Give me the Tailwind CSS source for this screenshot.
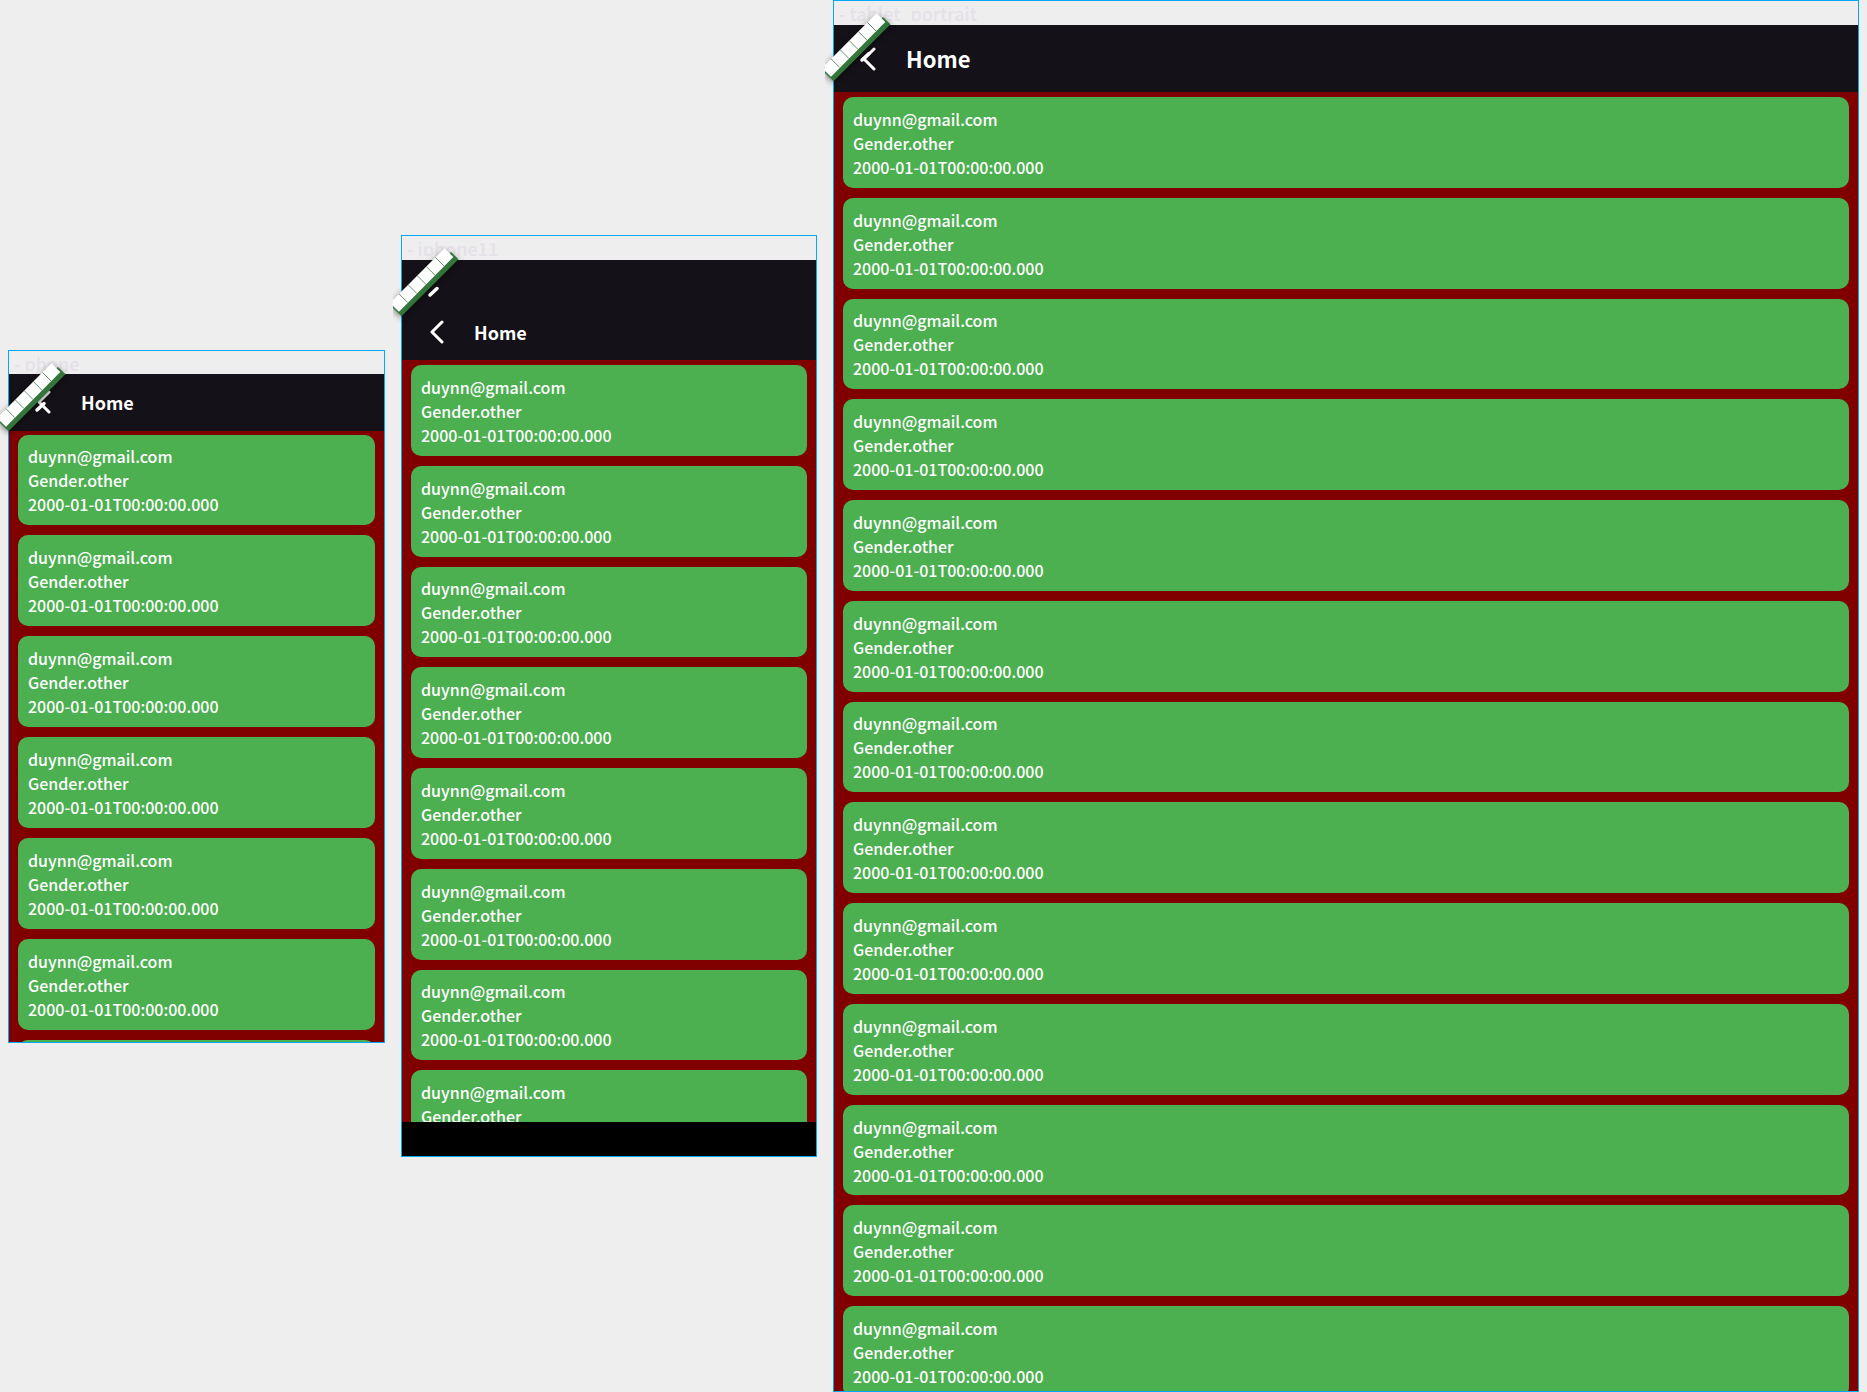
<!DOCTYPE html>
<html lang="en">
<head>
<meta charset="utf-8">
<meta name="viewport" content="width=device-width, initial-scale=1">
<title>Home</title>
<script src="https://cdn.jsdelivr.net/npm/@tailwindcss/browser@4"></script>
</head>
<body class="bg-[#eeeeee] font-['Noto_Sans_CJK_SC',sans-serif] text-base text-white">

<main class="flex h-screen items-center gap-4 overflow-hidden px-2">

  <section class="relative flex h-[693px] w-[377px] shrink-0 flex-col border border-[#03a9f4]" data-cards="7">
    <div class="h-[23px] shrink-0 pl-[5px]"><p class="h-5 overflow-hidden text-lg leading-6 font-medium text-[#e6e0e9]">- phone</p></div>
    <header class="flex h-[57px] shrink-0 items-center gap-6 bg-[#141218] pl-6">
      <button type="button" aria-label="Back" class="size-6"><svg viewBox="0 0 24 24" class="size-6" fill="none" stroke="currentColor" stroke-width="3" stroke-linecap="round" stroke-linejoin="round"><path d="M16 2 6 12l10 10"/></svg></button>
      <h1 class="text-lg font-bold">Home</h1>
    </header>
    <div class="min-h-0 flex-1 overflow-hidden bg-[#800000] px-[9px] pt-1">
      <ul class="grid h-[696px] auto-rows-fr gap-[10px]"></ul>
    </div>
  </section>

  <section class="relative flex h-[922px] w-[416px] shrink-0 flex-col border border-[#03a9f4]" data-cards="8">
    <div class="h-6 shrink-0 pl-[5px]"><p class="h-5 overflow-hidden text-lg leading-6 font-medium text-[#e6e0e9]">- iphone11</p></div>
    <header class="flex h-[100px] shrink-0 items-center gap-6 bg-[#141218] pl-6 pt-11">
      <button type="button" aria-label="Back" class="size-6"><svg viewBox="0 0 24 24" class="size-6" fill="none" stroke="currentColor" stroke-width="3" stroke-linecap="round" stroke-linejoin="round"><path d="M16 2 6 12l10 10"/></svg></button>
      <h1 class="text-lg font-bold">Home</h1>
    </header>
    <div class="min-h-0 flex-1 overflow-hidden bg-[#800000] px-[9px] pt-[5px]">
      <ul class="grid h-[796px] auto-rows-fr gap-[10px]"></ul>
    </div>
    <div class="h-[34px] shrink-0 bg-black"></div>
  </section>

  <section class="relative flex h-full min-w-0 flex-1 flex-col border border-[#03a9f4]" data-cards="13">
    <div class="h-6 shrink-0 pl-[5px]"><p class="h-5 overflow-hidden text-lg leading-6 font-medium text-[#e6e0e9]">- tablet_portrait</p></div>
    <header class="flex h-[67px] shrink-0 items-center gap-6 bg-[#141218] pl-6">
      <button type="button" aria-label="Back" class="size-6"><svg viewBox="0 0 24 24" class="size-6" fill="none" stroke="currentColor" stroke-width="3" stroke-linecap="round" stroke-linejoin="round"><path d="M16 2 6 12l10 10"/></svg></button>
      <h1 class="text-[22px] font-bold">Home</h1>
    </header>
    <div class="min-h-0 flex-1 overflow-hidden bg-[#800000] px-[9px] pt-[5px]">
      <ul class="grid h-[1300px] auto-rows-fr gap-[10px]"></ul>
    </div>
  </section>

</main>

<template id="card">
  <li class="flex flex-col justify-center rounded-[10px] bg-[#4caf50] px-[10px] pt-px font-medium leading-6">
    <p>duynn@gmail.com</p>
    <p>Gender.other</p>
    <p>2000-01-01T00:00:00.000</p>
  </li>
</template>

<!-- Corner debug ribbon -->
<template id="ribbon">
  <svg class="pointer-events-none absolute -left-[9px] -top-px h-[90px] w-[76px]" viewBox="0 0 76 90" aria-hidden="true">
    <g class="drop-shadow-[0_2px_3px_rgba(0,0,0,0.45)]">
      <path d="M58 17 65.500 24.300 8.500 81.300 0 73V68Z" fill="#33753a"/>
      <path d="M51.500 13.300 60.300 22 6 76.700 0 71V65Z" fill="#fff"/>
    </g>
    <path d="M42.400 22.400l8.700 8.700M33.300 31.500l8.700 8.700M24.200 40.600l8.700 8.700M15.100 49.700l8.700 8.700M6 58.800l8.700 8.700" stroke="#2c5f31" stroke-width=".7"/>
    <path d="M37 60l7-6.500" stroke="#fff" stroke-width="3.500" stroke-linecap="round"/>
  </svg>
</template>

<script>
  const card = document.getElementById('card').content;
  const ribbon = document.getElementById('ribbon').content;
  document.querySelectorAll('section').forEach((device) => {
    const list = device.querySelector('ul');
    for (let i = 0; i < Number(device.dataset.cards); i++) list.append(card.cloneNode(true));
    device.append(ribbon.cloneNode(true));
  });
</script>
</body>
</html>
